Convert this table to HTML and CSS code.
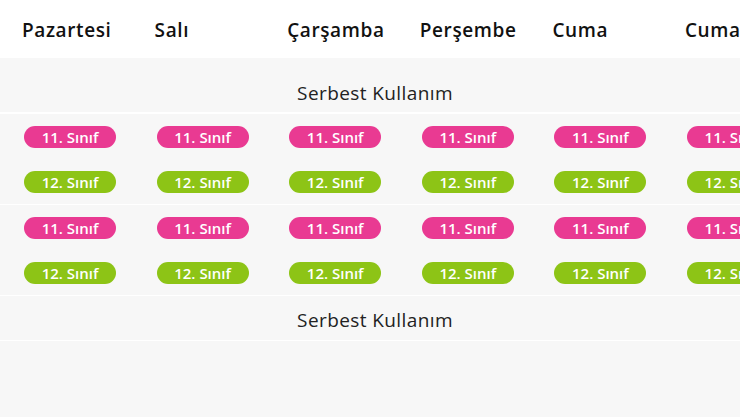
FILE: index.html
```html
<!DOCTYPE html>
<html lang="tr">
  <head>
    <meta charset="UTF-8" />
    <meta name="viewport" content="width=device-width, initial-scale=1.0" />
    <title>Ders Programı</title>
    <link rel="stylesheet" href="styles.css">
  </head>
  <body>
    <div class="schedule">
      <!-- günler -->
      <div class="days">
        <div class="day">Pazartesi</div>
        <div class="day">Salı</div>
        <div class="day">Çarşamba</div>
        <div class="day">Perşembe</div>
        <div class="day">Cuma</div>
        <div class="day">Cuma</div>
      </div>

      <div class="body">
        <div class="free first">Serbest Kullanım</div>

        <!-- 1. blok -->
        <div class="group">
          <div class="row">
            <div class="cell"><span class="pill pink">11. Sınıf</span></div>
            <div class="cell"><span class="pill pink">11. Sınıf</span></div>
            <div class="cell"><span class="pill pink">11. Sınıf</span></div>
            <div class="cell"><span class="pill pink">11. Sınıf</span></div>
            <div class="cell"><span class="pill pink">11. Sınıf</span></div>
            <div class="cell"><span class="pill pink">11. Sınıf</span></div>
          </div>
          <div class="row">
            <div class="cell"><span class="pill green">12. Sınıf</span></div>
            <div class="cell"><span class="pill green">12. Sınıf</span></div>
            <div class="cell"><span class="pill green">12. Sınıf</span></div>
            <div class="cell"><span class="pill green">12. Sınıf</span></div>
            <div class="cell"><span class="pill green">12. Sınıf</span></div>
            <div class="cell"><span class="pill green">12. Sınıf</span></div>
          </div>
        </div>

        <!-- 2. blok -->
        <div class="group">
          <div class="row">
            <div class="cell"><span class="pill pink">11. Sınıf</span></div>
            <div class="cell"><span class="pill pink">11. Sınıf</span></div>
            <div class="cell"><span class="pill pink">11. Sınıf</span></div>
            <div class="cell"><span class="pill pink">11. Sınıf</span></div>
            <div class="cell"><span class="pill pink">11. Sınıf</span></div>
            <div class="cell"><span class="pill pink">11. Sınıf</span></div>
          </div>
          <div class="row">
            <div class="cell"><span class="pill green">12. Sınıf</span></div>
            <div class="cell"><span class="pill green">12. Sınıf</span></div>
            <div class="cell"><span class="pill green">12. Sınıf</span></div>
            <div class="cell"><span class="pill green">12. Sınıf</span></div>
            <div class="cell"><span class="pill green">12. Sınıf</span></div>
            <div class="cell"><span class="pill green">12. Sınıf</span></div>
          </div>
        </div>

        <div class="free">Serbest Kullanım</div>
      </div>
    </div>
  </body>
</html>
```

FILE: styles.css
```css
*,
*::before,
*::after {
  margin: 0;
  padding: 0;
  box-sizing: border-box;
}

body {
  width: 740px;
  height: 417px;
  overflow: hidden;

  font-family: "Open Sans", "Noto Sans", sans-serif;
  color: #1a1a1a;
  background: #f7f7f7;
}

/* ---------------- günler ---------------- */
.days {
  display: flex;
  height: 58px;
  padding: 2px 0 0 22px;
  align-items: center;

  background: #ffffff;
}

.day {
  flex: 0 0 132.6px;

  font-size: 19px;
  font-weight: 600;
  letter-spacing: 0.6px;
  color: #111;
}

/* ---------------- tablo ---------------- */
.body {
  padding-top: 10px;
}

.free {
  height: 45px;
  padding: 11px 0 0 10px;

  text-align: center;
  font-size: 19px;
  letter-spacing: 0.4px;
  color: #222;

  border-bottom: 1px solid #ffffff;
}

.free.first {
  height: 46px;
  padding-top: 12px;
  border-bottom-width: 2px;
}

.group {
  border-bottom: 1px solid #ffffff;
}

.row {
  display: flex;
  height: 45px;
  padding-left: 24px;
  align-items: center;
}

.cell {
  flex: 0 0 132.6px;
}

/* ---------------- sınıf etiketi ---------------- */
.pill {
  display: flex;
  justify-content: center;
  align-items: center;

  width: 92px;
  height: 22px;
  border-radius: 11px;

  font-size: 15px;
  font-weight: 600;
  color: #ffffff;
}

.pink {
  background: #e93a92;
}

.green {
  background: #8dc416;
}
```
